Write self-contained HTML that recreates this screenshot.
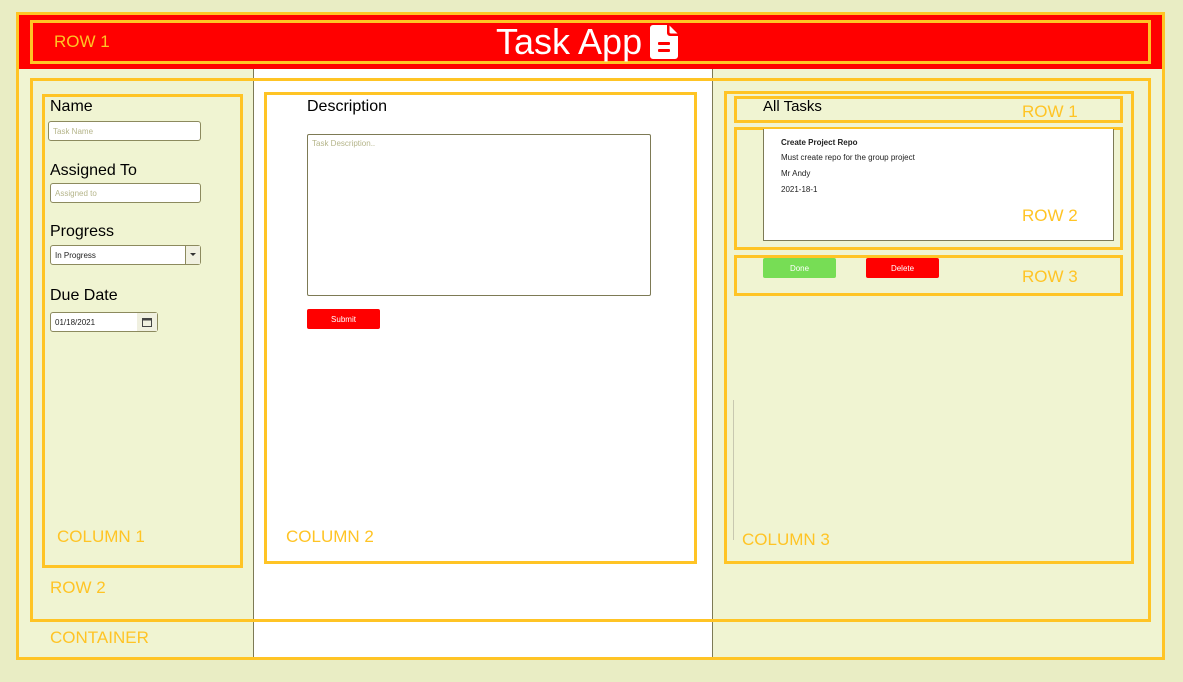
<!DOCTYPE html>
<html><head><meta charset="utf-8"><style>
*{box-sizing:border-box;margin:0;padding:0}
body{width:1183px;height:682px;background:#e9edc4;position:relative;overflow:hidden;font-family:"Liberation Sans",Arial,sans-serif}
.a{position:absolute}
.box{position:absolute;border:3px solid #ffc425}
.lbl{position:absolute;color:#ffc425;font-size:17px;line-height:1;white-space:nowrap}
.t{position:absolute;font-size:16px;line-height:1;color:#000;white-space:nowrap}
.in{position:absolute;background:#fff;border:1px solid #8c8a5e;border-radius:3px;font-size:8px;color:#b5b58a;padding-left:4px;display:flex;align-items:center}
.btn{position:absolute;border-radius:2px;color:#fff;font-size:8px;display:flex;align-items:center;justify-content:center}
.s{position:absolute;font-size:8px;color:#222;line-height:1;white-space:nowrap}
</style></head><body>
<div class="a" style="left:18px;top:69px;width:236px;height:590px;background:#f0f4d2"></div>
<div class="a" style="left:254px;top:69px;width:459px;height:590px;background:#fff"></div>
<div class="a" style="left:713px;top:69px;width:449px;height:590px;background:#f0f4d2"></div>
<div class="a" style="left:253px;top:69px;width:1px;height:590px;background:#7d7a55"></div>
<div class="a" style="left:712px;top:69px;width:1px;height:590px;background:#7d7a55"></div>
<div class="a" style="left:18px;top:14px;width:1144px;height:55px;background:#ff0000"></div>
<div class="box" style="left:16px;top:12px;width:1149px;height:648px"></div>
<div class="box" style="left:30px;top:20px;width:1121px;height:44px"></div>
<div class="lbl" style="left:54px;top:33px">ROW 1</div>
<div class="a" style="left:496px;top:24px;color:#fff;font-size:36px;line-height:1">Task App</div>
<svg class="a" style="left:650px;top:25px" width="28" height="34" viewBox="0 0 28 34"><path d="M3 0H17V8a3 3 0 0 0 3 3H28V31a3 3 0 0 1-3 3H3a3 3 0 0 1-3-3V3a3 3 0 0 1 3-3z" fill="#fff"/><path d="M19.5 0.5L27.5 8.5H21a1.5 1.5 0 0 1-1.5-1.5z" fill="#fff"/><rect x="8" y="17" width="12" height="3" rx="1" fill="#ff0000"/><rect x="8" y="24" width="12" height="3" rx="1" fill="#ff0000"/></svg>
<div class="box" style="left:30px;top:78px;width:1121px;height:544px"></div>
<div class="box" style="left:42px;top:94px;width:201px;height:474px"></div>
<div class="box" style="left:264px;top:92px;width:433px;height:472px"></div>
<div class="box" style="left:724px;top:91px;width:410px;height:473px"></div>
<div class="t" style="left:50px;top:99px">Name</div>
<div class="in" style="left:48px;top:121px;width:153px;height:20px">Task Name</div>
<div class="t" style="left:50px;top:163px">Assigned To</div>
<div class="in" style="left:50px;top:183px;width:151px;height:20px">Assigned to</div>
<div class="t" style="left:50px;top:224px">Progress</div>
<div class="in" style="left:50px;top:245px;width:151px;height:20px;color:#222">In Progress<div class="a" style="right:0;top:0;width:15px;height:18px;border-left:1px solid #8c8a5e;background:#f0f0e0"><div class="a" style="left:4px;top:7px;border:3px solid transparent;border-top:3px solid #333"></div></div></div>
<div class="t" style="left:50px;top:288px">Due Date</div>
<div class="in" style="left:50px;top:312px;width:108px;height:20px;color:#222">01/18/2021<div class="a" style="right:0;top:0;width:20px;height:18px;background:#f0f0e0"><svg class="a" style="left:5px;top:4px" width="10" height="10" viewBox="0 0 10 10"><rect x="0.5" y="1.5" width="9" height="8" fill="none" stroke="#444"/><rect x="0.5" y="1.5" width="9" height="2" fill="#444"/></svg></div></div>
<div class="lbl" style="left:57px;top:528px">COLUMN 1</div>
<div class="t" style="left:307px;top:99px">Description</div>
<div class="a" style="left:307px;top:134px;width:344px;height:162px;border:1px solid #7d7a55;border-radius:2px;font-size:8px;color:#b5b58a;padding:4px">Task Description..</div>
<div class="btn" style="left:307px;top:309px;width:73px;height:20px;background:#ff0000">Submit</div>
<div class="lbl" style="left:286px;top:528px">COLUMN 2</div>
<div class="box" style="left:734px;top:96px;width:389px;height:27px"></div>
<div class="t" style="left:763px;top:99px;font-size:15px">All Tasks</div>
<div class="lbl" style="left:1022px;top:103px">ROW 1</div>
<div class="box" style="left:734px;top:127px;width:389px;height:123px"></div>
<div class="a" style="left:763px;top:129px;width:351px;height:112px;background:#fff;border:1px solid #7d7a55;border-top:none"></div>
<div class="s" style="left:781px;top:139px;font-weight:bold">Create Project Repo</div>
<div class="s" style="left:781px;top:154px">Must create repo for the group project</div>
<div class="s" style="left:781px;top:170px">Mr Andy</div>
<div class="s" style="left:781px;top:186px">2021-18-1</div>
<div class="lbl" style="left:1022px;top:207px">ROW 2</div>
<div class="box" style="left:734px;top:255px;width:389px;height:41px"></div>
<div class="btn" style="left:763px;top:258px;width:73px;height:20px;background:#77dd55">Done</div>
<div class="btn" style="left:866px;top:258px;width:73px;height:20px;background:#ff0000">Delete</div>
<div class="lbl" style="left:1022px;top:268px">ROW 3</div>
<div class="a" style="left:733px;top:400px;width:1px;height:140px;background:#c8c8b0"></div>
<div class="lbl" style="left:742px;top:531px">COLUMN 3</div>
<div class="lbl" style="left:50px;top:579px">ROW 2</div>
<div class="lbl" style="left:50px;top:629px">CONTAINER</div>
</body></html>
